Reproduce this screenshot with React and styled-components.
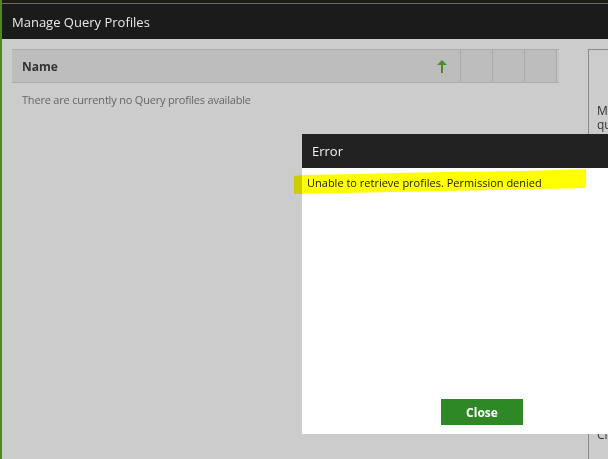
import React from "react";
import styled, { createGlobalStyle } from "styled-components";

const Global = createGlobalStyle`
  html, body { margin: 0; padding: 0; background: #cccccc; overflow: hidden; }
  body { font-family: "Open Sans", "Noto Sans", sans-serif; }
`;

const Page = styled.div`
  position: relative;
  width: 606px;
  height: 459px;
  border-left: 2px solid #4a8c22;
  background: #cccccc;
  overflow: hidden;
  display: flex;
  flex-direction: column;
`;

const TitleBar = styled.div`
  height: 35px;
  margin-top: 3px;
  border-top: 1px solid #4a8c22;
  background: #1b1b1b;
  box-shadow: 0 -3px 0 #1b1b1b;
  display: flex;
  align-items: center;
  padding-left: 10px;
  color: #e8e8e8;
  font-size: 13px;
  flex-shrink: 0;
`;

const Body = styled.div`
  flex: 1;
  display: flex;
  padding: 10px 0 0 10px;
  gap: 29px;
`;

const ListColumn = styled.div`
  width: 547px;
  flex-shrink: 0;
`;

const HeaderRow = styled.div`
  display: flex;
  height: 32px;
  border-top: 1px solid #ababab;
  border-bottom: 1px solid #ababab;
  background: #c4c4c4;
`;

const NameCell = styled.div`
  flex: 1;
  display: flex;
  align-items: center;
  justify-content: space-between;
  padding: 0 13px 0 10px;
  background: #bdbdbd;
  font-size: 12px;
  font-weight: 700;
  color: #333;
`;

const ActionCell = styled.div`
  width: 31px;
  background: #bdbdbd;
  border-left: 1px solid #ababab;
  border-right: ${(p) => (p.$last ? "1px solid #ababab" : "none")};
`;

const Gutter = styled.div`
  width: 2px;
`;

const EmptyNote = styled.div`
  padding: 9px 0 0 10px;
  font-size: 11px;
  letter-spacing: -0.2px;
  color: #666;
`;

const SidePanel = styled.div`
  flex: 1;
  border-top: 1px solid #8a8a8a;
  border-left: 1px solid #8a8a8a;
  padding: 54px 0 0 8px;
  font-size: 12px;
  line-height: 14px;
  color: #333;
  white-space: nowrap;
`;

const SideText = styled.p`
  margin: 0 0 ${(p) => p.$gap || 0}px;
`;

const Dialog = styled.div`
  position: absolute;
  left: 300px;
  top: 134px;
  width: 360px;
  height: 300px;
  background: #fff;
  display: flex;
  flex-direction: column;
`;

const DialogHeader = styled.div`
  height: 34px;
  background: #222;
  color: #f2f2f2;
  font-size: 13px;
  display: flex;
  align-items: center;
  padding-left: 10px;
`;

const DialogMessage = styled.div`
  flex: 1;
  padding: 7px 5px;
  font-size: 11px;
  color: #222;
`;

const DialogFooter = styled.div`
  display: flex;
  justify-content: center;
  padding-bottom: 9px;
`;

const CloseButton = styled.button`
  width: 82px;
  height: 26px;
  border: none;
  background: #2f8826;
  color: #fff;
  font-family: "Open Sans", "Noto Sans", sans-serif;
  font-size: 12px;
  font-weight: 700;
  cursor: pointer;
`;

const Highlight = styled.svg`
  position: absolute;
  left: 292px;
  top: 166px;
  mix-blend-mode: multiply;
  pointer-events: none;
`;

const SortUp = () => (
  <svg width="10" height="13" viewBox="0 0 10 13">
    <path d="M5 0 L10 5 L6 5 L6 13 L4 13 L4 5 L0 5 Z" fill="#4a8c2a" />
  </svg>
);

export default function App() {
  return (
    <>
      <Global />
      <Page>
        <TitleBar>Manage Query Profiles</TitleBar>
        <Body>
          <ListColumn>
            <HeaderRow>
              <NameCell>
                Name
                <SortUp />
              </NameCell>
              <ActionCell />
              <ActionCell />
              <ActionCell $last />
              <Gutter />
            </HeaderRow>
            <EmptyNote>There are currently no Query profiles available</EmptyNote>
          </ListColumn>
          <SidePanel>
            <SideText>Manage saved profiles for your</SideText>
            <SideText $gap={296}>queries here.</SideText>
            <SideText>Click a profile to edit it.</SideText>
          </SidePanel>
        </Body>
        <Dialog>
          <DialogHeader>Error</DialogHeader>
          <DialogMessage>Unable to retrieve profiles. Permission denied</DialogMessage>
          <DialogFooter>
            <CloseButton>Close</CloseButton>
          </DialogFooter>
        </Dialog>
        <Highlight width="300" height="32" viewBox="0 0 300 32">
          <path
            d="M0 10 L10 9 L60 8 L150 6 L230 5 L292 3 L292 22 L250 23 L200 24 L150 25 L100 26 L50 27 L0 28 Z"
            fill="#ffff00"
          />
        </Highlight>
      </Page>
    </>
  );
}
